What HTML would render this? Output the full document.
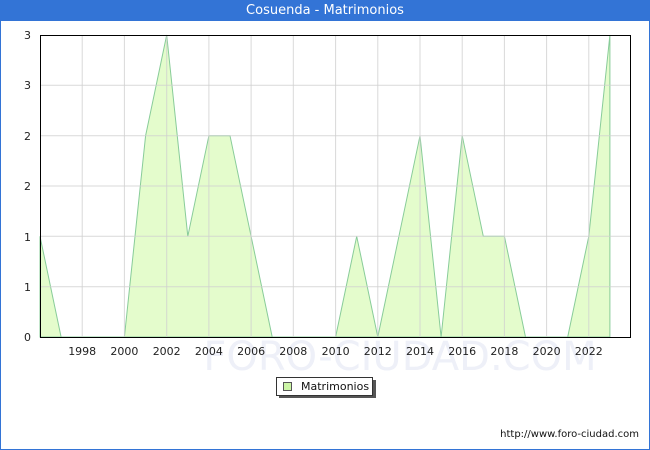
<!DOCTYPE html>
<html><head><meta charset="utf-8"><style>
html,body{margin:0;padding:0;background:#fff}
body{width:650px;height:450px;position:relative;overflow:hidden;font-family:"DejaVu Sans","Liberation Sans",sans-serif}
.frame{position:absolute;left:0;top:0;width:648px;height:448px;border:1px solid #3374d6}
.title{position:absolute;left:0;top:0;width:650px;height:21px;background:#3374d6;color:#fff;font-size:13px;line-height:22px;text-align:center}
</style></head><body>
<div class="frame"></div>
<div class="title">Cosuenda - Matrimonios</div>
<svg width="650" height="450" style="position:absolute;left:0;top:0" font-family="DejaVu Sans, Liberation Sans, sans-serif">
<text x="400" y="370" font-size="40" fill="#eef0f8" text-anchor="middle">FORO-CIUDAD.COM</text>
<polygon fill="#e4fccc" stroke="#88cc99" stroke-width="1" points="40,337 40,236.3 61.1,337 82.2,337 103.3,337 124.4,337 145.6,135.7 166.7,35 187.8,236.3 208.9,135.7 230,135.7 251.1,236.3 272.2,337 293.3,337 314.4,337 335.6,337 356.7,236.3 377.8,337 398.9,236.3 420,135.7 441.1,337 462.2,135.7 483.3,236.3 504.4,236.3 525.5,337 546.6,337 567.7,337 588.8,236.3 609.9,35 609.9,337"/>
<g stroke="#d0d0d0" stroke-width="1" stroke-opacity="0.8">
<line x1="40" y1="85.3" x2="630" y2="85.3"/><line x1="40" y1="135.7" x2="630" y2="135.7"/><line x1="40" y1="186" x2="630" y2="186"/><line x1="40" y1="236.3" x2="630" y2="236.3"/><line x1="40" y1="286.7" x2="630" y2="286.7"/>
<line x1="82.2" y1="35" x2="82.2" y2="337"/><line x1="124.4" y1="35" x2="124.4" y2="337"/><line x1="166.7" y1="35" x2="166.7" y2="337"/><line x1="208.9" y1="35" x2="208.9" y2="337"/><line x1="251.1" y1="35" x2="251.1" y2="337"/><line x1="293.3" y1="35" x2="293.3" y2="337"/><line x1="335.6" y1="35" x2="335.6" y2="337"/><line x1="377.8" y1="35" x2="377.8" y2="337"/><line x1="420" y1="35" x2="420" y2="337"/><line x1="462.2" y1="35" x2="462.2" y2="337"/><line x1="504.4" y1="35" x2="504.4" y2="337"/><line x1="546.6" y1="35" x2="546.6" y2="337"/><line x1="588.8" y1="35" x2="588.8" y2="337"/>
</g>
<rect x="40.5" y="35.5" width="590" height="302" fill="none" stroke="#000" stroke-width="1"/>
<g font-size="11" fill="#222" text-anchor="end">
<text x="31" y="39">3</text><text x="31" y="89">3</text><text x="31" y="140">2</text><text x="31" y="190">2</text><text x="31" y="241">1</text><text x="31" y="291">1</text><text x="31" y="341">0</text>
</g>
<g font-size="11" fill="#222" text-anchor="middle">
<text x="82.2" y="355">1998</text><text x="124.4" y="355">2000</text><text x="166.7" y="355">2002</text><text x="208.9" y="355">2004</text><text x="251.1" y="355">2006</text><text x="293.3" y="355">2008</text><text x="335.6" y="355">2010</text><text x="377.8" y="355">2012</text><text x="420" y="355">2014</text><text x="462.2" y="355">2016</text><text x="504.4" y="355">2018</text><text x="546.6" y="355">2020</text><text x="588.8" y="355">2022</text>
</g>
<rect x="279" y="380" width="97" height="18" fill="#555"/>
<rect x="276.5" y="377.5" width="96" height="18" fill="#fff" stroke="#333"/>
<rect x="283.5" y="382.5" width="8" height="8" fill="#ccf5a6" stroke="#555"/>
<text x="301" y="390" font-size="11" fill="#111">Matrimonios</text>
<text x="639" y="437" font-size="10" fill="#111" text-anchor="end">http://www.foro-ciudad.com</text>
</svg>
</body></html>
